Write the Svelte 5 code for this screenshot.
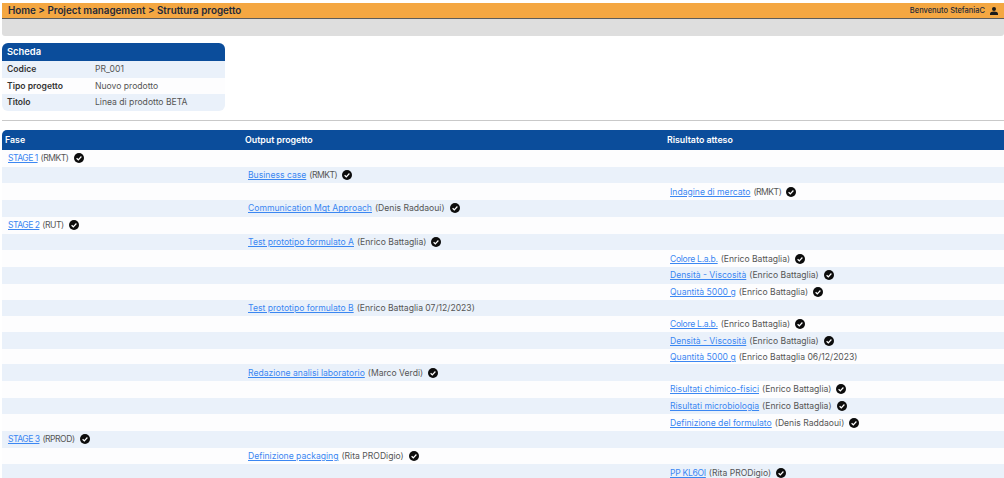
<script>
    // col: 0 fase, 1 output, 2 risultato
    const rows = [
        { col: 0, link: "STAGE 1", who: "(RMKT)", ok: true },
        { col: 1, link: "Business case", who: "(RMKT)", ok: true },
        { col: 2, link: "Indagine di mercato", who: "(RMKT)", ok: true },
        { col: 1, link: "Communication Mgt Approach", who: "(Denis Raddaoui)", ok: true },
        { col: 0, link: "STAGE 2", who: "(RUT)", ok: true },
        { col: 1, link: "Test prototipo formulato A", who: "(Enrico Battaglia)", ok: true },
        { col: 2, link: "Colore L.a.b.", who: "(Enrico Battaglia)", ok: true, tight: true },
        { col: 2, link: "Densità - Viscosità", who: "(Enrico Battaglia)", ok: true },
        { col: 2, link: "Quantità 5000 g", who: "(Enrico Battaglia)", ok: true },
        { col: 1, link: "Test prototipo formulato B", who: "(Enrico Battaglia 07/12/2023)", ok: false },
        { col: 2, link: "Colore L.a.b.", who: "(Enrico Battaglia)", ok: true, tight: true },
        { col: 2, link: "Densità - Viscosità", who: "(Enrico Battaglia)", ok: true },
        { col: 2, link: "Quantità 5000 g", who: "(Enrico Battaglia 06/12/2023)", ok: false },
        { col: 1, link: "Redazione analisi laboratorio", who: "(Marco Verdi)", ok: true },
        { col: 2, link: "Risultati chimico-fisici", who: "(Enrico Battaglia)", ok: true },
        { col: 2, link: "Risultati microbiologia", who: "(Enrico Battaglia)", ok: true },
        { col: 2, link: "Definizione del formulato", who: "(Denis Raddaoui)", ok: true },
        { col: 0, link: "STAGE 3", who: "(RPROD)", ok: true },
        { col: 1, link: "Definizione packaging", who: "(Rita PRODigio)", ok: true },
        { col: 2, link: "PP KL6OI", who: "(Rita PRODigio)", ok: true, tight: true }
    ];
    const scheda = [
        ["Codice", "PR_001"],
        ["Tipo progetto", "Nuovo prodotto"],
        ["Titolo", "Linea di prodotto BETA"]
    ];
    const isSigla = (who) => /^\([A-Z]+\)$/.test(who);
</script>

<header class="topbar">
    <span class="crumbs">Home &gt; Project management &gt; Struttura progetto</span>
    <span class="user">
        Benvenuto StefaniaC
        <svg width="8" height="8" viewBox="0 0 10 10">
            <circle cx="5" cy="2.6" r="2.5" fill="#1b1b1b" />
            <path d="M0 10V8.2C0 6.6 2.2 5.7 5 5.7S10 6.6 10 8.2V10Z" fill="#1b1b1b" />
        </svg>
    </span>
</header>
<div class="toolbar"></div>

<section class="scheda">
    <h2>Scheda</h2>
    {#each scheda as [label, value]}
        <div class="scheda-row">
            <b>{label}</b>
            <span>{value}</span>
        </div>
    {/each}
</section>

<hr />

<div class="grid head">
    <div>Fase</div>
    <div>Output progetto</div>
    <div>Risultato atteso</div>
</div>
{#each rows as row, i}
    <div class="grid row" class:alt={i % 2 === 1} class:short={!row.ok}>
        {#each [0, 1, 2] as c}
            <div class="cell">
                {#if row.col === c}
                    <a href="#top" class:stage={c === 0} class:tight={row.tight}>{row.link}</a>
                    <span class="who" class:sigla={isSigla(row.who)}>{row.who}</span>
                    {#if row.ok}
                        <svg class="check" width="10" height="10" viewBox="0 0 10 10">
                            <circle cx="5" cy="5" r="5" fill="#0c0c0c" />
                            <path d="M2.6 5.2L4.3 6.8L7.4 3.5" fill="none" stroke="#fff" stroke-width="1.2" />
                        </svg>
                    {/if}
                {/if}
            </div>
        {/each}
    </div>
{/each}

<style>
    :global(body) {
        margin: 0;
        background: #fff;
        font-family: "Inter", "Liberation Sans", sans-serif;
        font-size: 8.6px;
        color: #555;
        overflow: hidden;
    }
    .topbar {
        box-sizing: border-box;
        margin: 3px 0 0 2px;
        height: 16px;
        padding: 0 6px 0 6px;
        display: flex;
        justify-content: space-between;
        align-items: center;
        background: #f4a742;
        border-bottom: 1px solid #5c5c5c;
        color: #1f2a3a;
    }
    .crumbs {
        font-size: 9.8px;
        font-weight: 600;
    }
    .user {
        display: flex;
        align-items: center;
        gap: 5px;
        font-size: 7.5px;
        font-weight: 500;
    }
    .toolbar {
        height: 17px;
        margin-left: 2px;
        background: #dedede;
        border-radius: 0 0 3px 3px;
    }
    .scheda {
        width: 223px;
        margin: 7px 0 0 2px;
        border-radius: 6px;
        overflow: hidden;
    }
    h2 {
        margin: 0;
        height: 18px;
        line-height: 18px;
        padding-left: 5px;
        background: #0b4d9b;
        color: #fff;
        font-size: 9.4px;
        font-weight: 600;
    }
    .scheda-row {
        display: grid;
        grid-template-columns: 88px 1fr;
        height: 16.7px;
        line-height: 16.7px;
        padding-left: 5px;
    }
    .scheda-row:nth-of-type(odd) {
        background: #eaf1fa;
    }
    .scheda-row:nth-of-type(even) {
        background: #fdfdfe;
    }
    .scheda-row b {
        color: #333;
        font-weight: 600;
    }
    hr {
        margin: 9px 0 9px 2px;
        border: 0;
        border-top: 1px solid #c9c9c9;
    }
    .grid {
        display: grid;
        grid-template-columns: 240px 422px 1fr;
        margin-left: 2px;
    }
    .head {
        height: 20px;
        line-height: 20px;
        background: #0b4d9b;
        color: #fff;
        font-size: 8.8px;
        font-weight: 600;
        border-radius: 5px 0 0 0;
    }
    .head div {
        padding-left: 3px;
    }
    .row {
        height: 16.7px;
        line-height: 16px;
        background: #fdfdfe;
    }
    .row.alt {
        background: #eaf1fa;
    }
    .row.short {
        height: 15.3px;
    }
    .cell {
        display: flex;
        align-items: center;
        gap: 3px;
        padding-left: 6px;
        white-space: nowrap;
    }
    a {
        color: #3b87f2;
    }
    a.stage {
        letter-spacing: -0.55px;
    }
    a.tight {
        letter-spacing: -0.3px;
    }
    .who.sigla {
        letter-spacing: -0.5px;
    }
    .check {
        margin-left: 2px;
    }
</style>
